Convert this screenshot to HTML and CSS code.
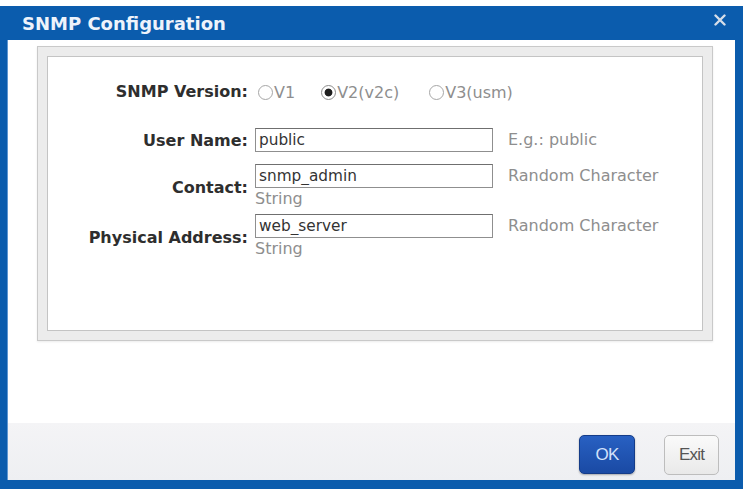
FILE: index.html
```html
<!DOCTYPE html>
<html lang="en">
<head>
    <meta charset="UTF-8">
    <meta name="viewport" content="width=device-width, initial-scale=1.0">
    <title>SNMP Configuration</title>
    <link rel="stylesheet" href="styles.css">
</head>
<body>
    <div class="dialog">
        <div class="titlebar">
            <h1>SNMP Configuration</h1>
            <span class="close" title="Close">
                <svg width="12" height="12" viewBox="0 0 12 12">
                    <path d="M1.5 1.5 L10.5 10.5 M10.5 1.5 L1.5 10.5" stroke="#d6dee9" stroke-width="2.4" stroke-linecap="round"/>
                </svg>
            </span>
        </div>

        <div class="content">
            <div class="frame">
                <div class="panel">
                    <div class="row version-row">
                        <span class="label">SNMP Version:</span>
                        <div class="field radios">
                            <label class="radio radio-v1"><input type="radio" name="ver">V1</label>
                            <label class="radio radio-v2"><input type="radio" name="ver" checked>V2(v2c)</label>
                            <label class="radio"><input type="radio" name="ver">V3(usm)</label>
                        </div>
                    </div>

                    <div class="row user-row">
                        <label class="label" for="userName">User Name:</label>
                        <div class="field">
                            <input type="text" id="userName" value="public">
                        </div>
                        <span class="hint">E.g.: public</span>
                    </div>

                    <div class="row contact-row">
                        <label class="label" for="contact">Contact:</label>
                        <div class="field">
                            <input type="text" id="contact" value="snmp_admin">
                            <div class="note">String</div>
                        </div>
                        <span class="hint">Random Character</span>
                    </div>

                    <div class="row address-row">
                        <label class="label" for="address">Physical Address:</label>
                        <div class="field">
                            <input type="text" id="address" value="web_server">
                            <div class="note">String</div>
                        </div>
                        <span class="hint">Random Character</span>
                    </div>
                </div>
            </div>

            <div class="footer">
                <button class="btn btn-ok">OK</button>
                <button class="btn btn-exit">Exit</button>
            </div>
        </div>
    </div>
</body>
</html>
```

FILE: styles.css
```css
body {
    margin: 0;
    background-color: #ffffff;
    font-family: "DejaVu Sans", Verdana, sans-serif;
}
.dialog {
    margin-top: 6px;
    height: 483px;
    box-sizing: border-box;
    background-color: #0b5cad;
    padding: 0 8px 9px 7px;
    display: flex;
    flex-direction: column;
}
.titlebar {
    height: 34px;
    display: flex;
    align-items: center;
    justify-content: space-between;
    padding: 0 9px 0 15px;
}
.titlebar h1 {
    margin: 0;
    font-family: "DejaVu Sans", sans-serif;
    font-size: 18px;
    font-weight: bold;
    color: #eef3fb;
    letter-spacing: 0;
    padding-top: 1px;
}
.close {
    display: flex;
    margin-top: -6px;
}
.content {
    flex: 1;
    background-color: #ffffff;
    display: flex;
    flex-direction: column;
    border-left: 1px solid #5f97d2;
}
.frame {
    margin: 6px 22px 0 29px;
    height: 295px;
    box-sizing: border-box;
    background-color: #ececec;
    border: 1px solid #c9c9c9;
    padding: 9px;
    box-shadow: 0 1px 2px rgba(0, 0, 0, 0.08);
}
.panel {
    height: 100%;
    box-sizing: border-box;
    background-color: #ffffff;
    border: 1px solid #c4c4c4;
    padding-top: 25px;
}
.row {
    display: flex;
    align-items: flex-start;
}
.label {
    width: 200px;
    flex: none;
    text-align: right;
    font-weight: bold;
    font-size: 16px;
    color: #2e2e2e;
    align-self: center;
}
.field {
    width: 238px;
    flex: none;
    margin-left: 7px;
}
.hint {
    margin-left: 15px;
    font-size: 16px;
    color: #8e8e8e;
    line-height: 24px;
}
.user-row {
    margin-top: 26px;
}
.contact-row {
    margin-top: 12px;
}
.address-row {
    margin-top: 4px;
}
.version-row .label {
    line-height: 20px;
}
input[type="text"] {
    display: block;
    width: 100%;
    height: 24px;
    box-sizing: border-box;
    margin: 0;
    padding: 0 3px;
    border: 1px solid #8f8f8f;
    border-top-color: #6f6f6f;
    font-family: "DejaVu Sans", sans-serif;
    font-size: 15.3px;
    color: #333333;
    background-color: #ffffff;
}
.note {
    font-size: 16px;
    color: #8e8e8e;
    line-height: 22px;
}
.radios {
    display: flex;
    height: 20px;
    align-items: center;
}
.radio {
    display: flex;
    align-items: center;
    font-size: 16px;
    color: #8e8e8e;
    cursor: pointer;
}
.radio-v1 {
    margin-right: 23px;
}
.radio-v2 {
    margin-right: 27px;
}
.radio input {
    appearance: none;
    -webkit-appearance: none;
    flex: none;
    width: 15px;
    height: 15px;
    margin: 0 1px 0 3px;
    border: 1px solid #a6a6a6;
    border-radius: 50%;
    box-sizing: border-box;
    background-color: #ffffff;
}
.radio input:checked {
    background: radial-gradient(circle, #1e1e1e 0, #1e1e1e 3.5px, #ffffff 4.3px);
    border-color: #8c8c8c;
}
.footer {
    margin-top: auto;
    height: 57px;
    background: linear-gradient(#f4f4f6, #eeeff2);
    display: flex;
    align-items: center;
    justify-content: flex-end;
    padding-right: 16px;
    padding-top: 6px;
    box-sizing: border-box;
}
.btn {
    font-family: "Liberation Sans", Arial, sans-serif;
    font-size: 17px;
    height: 39px;
    width: 56px;
    border-radius: 5px;
    cursor: pointer;
    letter-spacing: -0.8px;
}
.btn-ok {
    background: linear-gradient(#2860c2, #1a4aa4);
    border: 1px solid #153c88;
    color: #d3e1fa;
    margin-right: 29px;
    box-shadow: 0 1px 2px rgba(0, 0, 0, 0.3);
}
.btn-exit {
    background: linear-gradient(#fafafa, #e9e9e9);
    border: 1px solid #bdbdbd;
    color: #555555;
    height: 40px;
    width: 55px;
}
```
